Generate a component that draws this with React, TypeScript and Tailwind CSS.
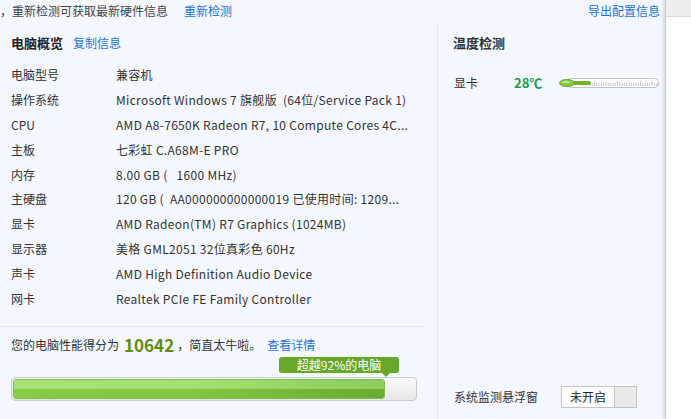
import React from "react";

const font = { fontFamily: '"Noto Sans CJK SC", "Open Sans", sans-serif' };

const rows = [
  { label: "电脑型号", value: "兼容机" },
  { label: "操作系统", value: "Microsoft Windows 7 旗舰版  (64位/Service Pack 1)" },
  { label: "CPU", value: "AMD A8-7650K Radeon R7, 10 Compute Cores 4C..." },
  { label: "主板", value: "七彩虹 C.A68M-E PRO" },
  { label: "内存", value: "8.00 GB (   1600 MHz)" },
  { label: "主硬盘", value: "120 GB (  AA000000000000019 已使用时间: 1209..." },
  { label: "显卡", value: "AMD Radeon(TM) R7 Graphics (1024MB)" },
  { label: "显示器", value: "美格 GML2051 32位真彩色 60Hz" },
  { label: "声卡", value: "AMD High Definition Audio Device" },
  { label: "网卡", value: "Realtek PCIe FE Family Controller" },
];

function Thermometer() {
  const ticks = [];
  for (let i = 0; i < 34; i++) {
    const x = 24 + i * 2.3;
    ticks.push(
      <line key={i} x1={x} x2={x} y1={i % 5 === 0 ? 5 : 7} y2={10} stroke="#b8b8b8" strokeWidth="0.7" />
    );
  }
  return (
    <svg width="101" height="14" viewBox="0 0 101 14">
      <rect x="8.5" y="2.5" width="91" height="9" rx="4" fill="#fafafa" stroke="#c4c4c4" />
      {ticks}
      <rect x="6" y="5" width="26" height="4" rx="2" fill="#6fb32c" />
      <ellipse cx="8" cy="7" rx="7.5" ry="3.6" fill="#86c93f" stroke="#5c9e22" strokeWidth="0.8" />
      <ellipse cx="7" cy="6" rx="4" ry="1.2" fill="#b9e68a" />
    </svg>
  );
}

export default function App() {
  return (
    <div className="flex h-[419px] w-[691px] overflow-hidden bg-white text-[12px] text-[#333]" style={font}>
      {/* main */}
      <div className="flex w-[665px] flex-col bg-[#f4f7fd]">
        {/* top bar */}
        <div className="flex h-[22px] items-center justify-between pr-[5px]">
          <div className="flex items-center">
            <span className="text-[#444]">，重新检测可获取最新硬件信息</span>
            <span className="ml-[16px] text-[#1c74d8]">重新检测</span>
          </div>
          <span className="text-[#1c74d8]">导出配置信息</span>
        </div>

        <div className="flex flex-1">
          {/* left */}
          <div className="flex w-[425px] flex-col">
            <div className="flex h-[41px] items-center pl-[11px]">
              <span className="text-[13px] font-bold text-[#222]">电脑概览</span>
              <span className="ml-[10px] text-[#1c74d8]">复制信息</span>
            </div>
            <div className="flex flex-col">
              {rows.map((r) => (
                <div key={r.label} className="flex h-[24.8px] items-center pl-[11px]">
                  <span className="w-[105px] shrink-0">{r.label}</span>
                  <span className="whitespace-pre tracking-[0.3px]">{r.value}</span>
                </div>
              ))}
            </div>
            <div className="mt-[15px] h-px w-[425px] bg-[#e3e7ef]" />
            <div className="mt-[8px] flex h-[20px] items-center pl-[11px]">
              <span>您的电脑性能得分为</span>
              <span className="ml-[5px] text-[17px] font-bold text-[#5f8d0e]">10642</span>
              <span className="ml-[3px]">，简直太牛啦。</span>
              <span className="ml-[6px] text-[#1c74d8]">查看详情</span>
            </div>
            {/* tooltip */}
            <div className="mt-[2px] flex pl-[279px]">
              <div className="relative flex h-[16px] w-[120px] items-center justify-center rounded-[3px] bg-[#67a82a] text-[12px] leading-none text-white">
                超越92%的电脑
                <div className="absolute -bottom-[4px] left-[103px] h-0 w-0 border-x-[4px] border-t-[4px] border-x-transparent border-t-[#67a82a]" />
              </div>
            </div>
            {/* bar */}
            <div className="ml-[11px] mt-[4px] h-[24px] w-[406px] overflow-hidden rounded-[4px] border border-[#c9cbcf] bg-gradient-to-b from-[#fbfbfb] to-[#e6e6e6] p-px">
              <div className="flex h-full w-[372px] flex-col overflow-hidden rounded-[3px] border border-[#7fbb4a]">
                <div className="h-1/2 bg-gradient-to-r from-[#a6e276] via-[#a2e070] to-[#8ccc5c]" />
                <div className="h-1/2 bg-gradient-to-r from-[#86cc44] via-[#80c63e] to-[#6aab30]" />
              </div>
            </div>
          </div>

          {/* divider */}
          <div className="ml-[12px] w-px bg-[#e3e7ef]" />

          {/* right */}
          <div className="flex flex-1 flex-col pl-[15px]">
            <div className="flex h-[41px] items-center">
              <span className="text-[13px] font-bold text-[#333]">温度检测</span>
            </div>
            <div className="mt-[12px] flex h-[16px] items-center pl-[1px]">
              <span className="w-[60px]">显卡</span>
              <span className="w-[45px] text-[13px] font-bold text-[#1f9a4c]">28℃</span>
              <Thermometer />
            </div>
            <div className="mt-auto mb-[11px] flex items-center pl-[1px]">
              <span className="w-[107px]">系统监测悬浮窗</span>
              <div className="flex h-[22px] w-[76px] border border-[#c4c4c4] bg-[#e9e9e9]">
                <div className="flex w-[53px] items-center justify-center border-r border-[#c4c4c4] bg-white text-[#222]">
                  未开启
                </div>
              </div>
            </div>
          </div>
        </div>
      </div>

      {/* right edge */}
      <div className="flex w-[26px] flex-col border-l border-[#c9ccd3] shadow-[-2px_0_3px_rgba(0,0,0,0.12)]">
        <div className="h-[17px] border-b border-[#dcdcdc] bg-[#eeeeee]" />
        <div className="flex-1 bg-white" />
      </div>
    </div>
  );
}
